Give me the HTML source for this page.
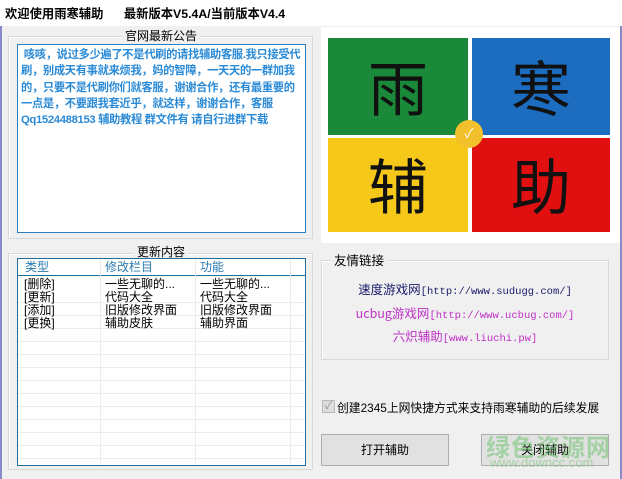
<!DOCTYPE html>
<html><head><meta charset="utf-8"><style>
*{margin:0;padding:0;box-sizing:border-box}
body{width:622px;height:479px;overflow:hidden;background:#f0f0f0;font-family:"Liberation Sans","Noto Sans CJK SC",sans-serif;font-size:12px;position:relative;color:#000}
.a{position:absolute;white-space:nowrap}
.title{left:0;top:0;width:622px;height:26px;background:#fff;font-weight:bold;font-size:12.3px;line-height:28px;padding-left:5px;white-space:pre}
.edge{top:26px;width:2px;height:453px;background:#8a8ac8}
.gb{border:1px solid #d8d8d8;box-shadow:inset 1px 1px 0 #fff}
.gt{background:#f0f0f0;padding:0 3px;font-size:12px;line-height:14px}
.ta{background:#fff;border:1px solid #2a7fc0;overflow:hidden}
.notice{color:#2a8ad6;font-weight:bold;font-size:11.3px;line-height:16.3px;padding:2px 3px;letter-spacing:-0.35px}
.lv{background:#fff;border:1px solid #1c6ea0;overflow:hidden}
.hl{left:0;width:100%;height:1px;background:#ececec}
.vl{top:0;width:1px;height:100%;background:#ececec}
.q{font-size:60px;line-height:1;font-family:"Noto Sans CJK SC",sans-serif;color:#111;text-align:center}
.lnk{font-family:"Liberation Mono","Noto Sans CJK SC",monospace;font-size:10.5px;text-align:center;width:288px;left:321px}
.lnk b{font-weight:normal;font-size:12.5px;font-family:"Noto Sans CJK SC",sans-serif}
.btn{background:#e1e1e1;border:1px solid #adadad;text-align:center;line-height:30px;font-size:12px}
</style></head><body>
<div class="a title">欢迎使用雨寒辅助      最新版本V5.4A/当前版本V4.4</div>
<div class="a edge" style="left:0"></div>
<div class="a edge" style="left:620px"></div>

<div class="a gb" style="left:8px;top:36px;width:305px;height:203px"></div>
<div class="a gt" style="left:122px;top:29px">官网最新公告</div>
<div class="a ta notice" style="left:17px;top:44px;width:289px;height:189px">&nbsp;咳咳，说过多少遍了不是代刷的请找辅助客服.我只接受代<br>刷，别成天有事就来烦我，妈的智障，一天天的一群加我<br>的，只要不是代刷你们就客服，谢谢合作，还有最重要的<br>一点是，不要跟我套近乎，就这样，谢谢合作，客服<br>Qq1524488153 辅助教程 群文件有 请自行进群下载</div>

<div class="a gb" style="left:8px;top:253px;width:305px;height:217px"></div>
<div class="a gt" style="left:134px;top:245px">更新内容</div>
<div class="a lv" style="left:17px;top:258px;width:289px;height:208px">
 <div class="a" style="left:0;top:16px;width:100%;height:1px;background:#1c6ea0"></div>
 <div class="a vl" style="left:82px"></div><div class="a vl" style="left:177px"></div><div class="a vl" style="left:272px"></div>
 <div class="a hl" style="top:43px"></div><div class="a hl" style="top:56px"></div><div class="a hl" style="top:69px"></div><div class="a hl" style="top:82px"></div><div class="a hl" style="top:95px"></div><div class="a hl" style="top:108px"></div><div class="a hl" style="top:121px"></div><div class="a hl" style="top:134px"></div><div class="a hl" style="top:147px"></div><div class="a hl" style="top:160px"></div><div class="a hl" style="top:173px"></div><div class="a hl" style="top:186px"></div><div class="a hl" style="top:199px"></div>
 <div class="a" style="left:7px;top:1px;color:#2a7ab0;line-height:14px">类型</div>
 <div class="a" style="left:87px;top:1px;color:#2a7ab0;line-height:14px">修改栏目</div>
 <div class="a" style="left:182px;top:1px;color:#2a7ab0;line-height:14px">功能</div>
 <div class="a" style="left:6px;top:19px;line-height:13px">[删除]<br>[更新]<br>[添加]<br>[更换]</div>
 <div class="a" style="left:87px;top:19px;line-height:13px">一些无聊的...<br>代码大全<br>旧版修改界面<br>辅助皮肤</div>
 <div class="a" style="left:182px;top:19px;line-height:13px">一些无聊的...<br>代码大全<br>旧版修改界面<br>辅助界面</div>
</div>

<div class="a" style="left:321px;top:27px;width:299px;height:216px;background:#fff"></div>
<div class="a q" style="left:328px;top:38px;width:140px;height:97px;background:#1a8a3a;padding-top:18px">雨</div>
<div class="a q" style="left:472px;top:38px;width:138px;height:97px;background:#1c6cc0;padding-top:18px">寒</div>
<div class="a q" style="left:328px;top:138px;width:140px;height:94px;background:#f5c81a;padding-top:16px">辅</div>
<div class="a q" style="left:472px;top:138px;width:138px;height:94px;background:#e01010;padding-top:16px">助</div>
<div class="a" style="left:455px;top:120px;width:28px;height:28px;border-radius:50%;background:#f2c02a;color:#fff;text-align:center;line-height:28px;font-size:13px">✓</div>

<div class="a gb" style="left:321px;top:260px;width:288px;height:100px"></div>
<div class="a gt" style="left:331px;top:254px;font-size:12.5px">友情链接</div>
<div class="a lnk" style="top:279px;color:#1a1a6a"><b>速度游戏网</b>[http://www.sudugg.com/]</div>
<div class="a lnk" style="top:303px;color:#c030c8"><b>ucbug游戏网</b>[http://www.ucbug.com/]</div>
<div class="a lnk" style="top:326px;color:#c030c8"><b>六炽辅助</b>[www.liuchi.pw]</div>

<div class="a" style="left:322px;top:400px;width:13px;height:13px;background:#ddd;border:1px solid #bbb;color:#999;font-size:11px;line-height:11px;text-align:center">✓</div>
<div class="a" style="left:337px;top:399px;font-size:11.8px">创建2345上网快捷方式来支持雨寒辅助的后续发展</div>

<div class="a btn" style="left:321px;top:434px;width:128px;height:32px">打开辅助</div>
<div class="a btn" style="left:481px;top:434px;width:128px;height:32px">关闭辅助</div>
<div class="a" style="left:486px;top:428px;font-size:24px;font-weight:bold;color:rgba(90,190,90,0.45);letter-spacing:1px">绿色资源网</div>
<div class="a" style="left:490px;top:455px;font-size:13px;color:rgba(90,190,90,0.45)">www.downcc.com</div>
</body></html>
